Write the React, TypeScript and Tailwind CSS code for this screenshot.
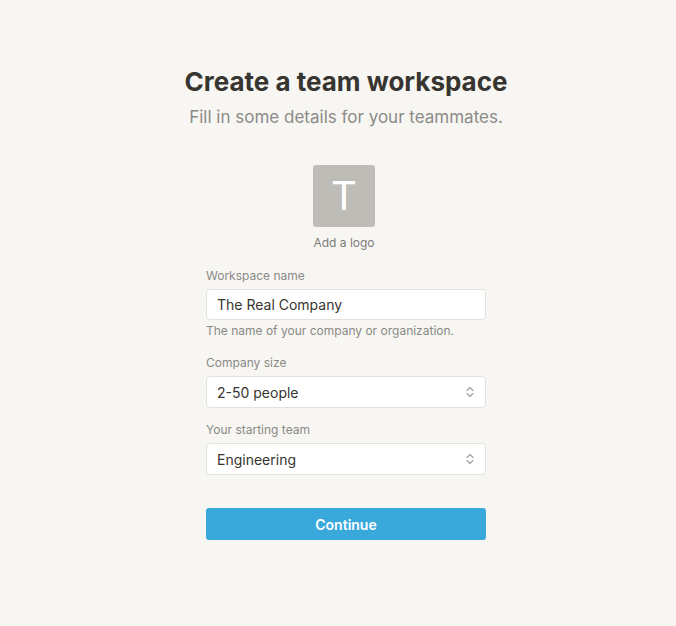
import { ReactNode } from "react";

const Chevrons = () => (
  <svg width="10" height="14" viewBox="0 0 10 14" fill="none" stroke="#a5a4a0" strokeWidth="1.2" strokeLinecap="round" strokeLinejoin="round">
    <path d="M2 5.5 L5 2.5 L8 5.5" />
    <path d="M2 8.5 L5 11.5 L8 8.5" />
  </svg>
);

const Field = ({ label, children, help }: { label: string; children: ReactNode; help?: string }) => (
  <div className="flex flex-col">
    <label className="text-[12px] leading-[16px] text-[#8a8985] mb-[5px]">{label}</label>
    {children}
    {help && <div className="mt-[3px] text-[12px] leading-[16px] text-[#8a8985]">{help}</div>}
  </div>
);

const Select = ({ value }: { value: string }) => (
  <div className="flex h-[32px] items-center justify-between rounded-[4px] border border-[#e3e2df] bg-white pl-[10px] pr-[10px]">
    <span className="text-[14px] text-[#37352f]">{value}</span>
    <Chevrons />
  </div>
);

export default function App() {
  return (
    <div
      className="min-h-[626px] w-full bg-[#f7f6f3] flex flex-col items-center pt-[65px] pl-[16px]"
      style={{ fontFamily: "Inter, 'Noto Sans', sans-serif" }}
    >
      <h1 className="text-[26px] leading-[34px] font-bold text-[#37352f]">
        Create a team workspace
      </h1>
      <p className="mt-[6px] text-[17px] leading-[24px] text-[#8c8b87]">
        Fill in some details for your teammates.
      </p>

      {/* Logo */}
      <div className="mt-[36px] mr-[4px] flex flex-col items-center">
        <div className="flex h-[62px] w-[62px] items-center justify-center rounded-[3px] bg-[#bebcb7]">
          <span className="text-[40px] font-normal leading-none text-white">T</span>
        </div>
        <span className="mt-[8px] text-[12px] leading-[16px] text-[#7d7c78]">Add a logo</span>
      </div>

      {/* Form */}
      <div className="mt-[17px] flex w-[280px] flex-col">
        <Field label="Workspace name" help="The name of your company or organization.">
          <div className="flex h-[31px] items-center rounded-[4px] border border-[#e3e2df] bg-white px-[10px]">
            <span className="text-[14px] text-[#37352f]">The Real Company</span>
          </div>
        </Field>

        <div className="mt-[16px]">
          <Field label="Company size">
            <Select value="2-50 people" />
          </Field>
        </div>

        <div className="mt-[14px]">
          <Field label="Your starting team">
            <Select value="Engineering" />
          </Field>
        </div>

        <button className="mt-[33px] h-[32px] w-full rounded-[3px] bg-[#39a9db] text-[14px] font-semibold text-white">
          Continue
        </button>
      </div>
    </div>
  );
}
